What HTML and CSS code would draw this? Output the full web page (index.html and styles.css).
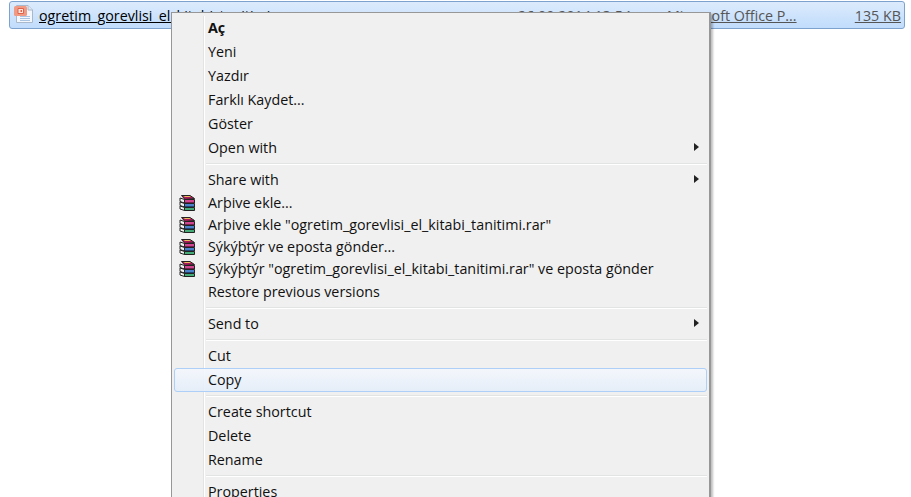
FILE: index.html
```html
<!DOCTYPE html>
<html lang="tr">
<head>
    <meta charset="UTF-8">
    <meta name="viewport" content="width=device-width, initial-scale=1.0">
    <title>Context menu</title>
    <link rel="stylesheet" href="styles.css">
</head>
<body>
    <svg class="defs" width="0" height="0">
        <symbol id="rar" viewBox="0 0 16 16">
            <path d="M2.500 .5L11 .5L15.500 3.500L6 4.500z" fill="#a8185a" stroke="#222"/>
            <path d="M4.500 1h6l1.500 1H6z" fill="#e8bc5c"/>
            <path d="M1 3L5.500 4.500V8L1 6.500z" fill="#f2f2f2" stroke="#222"/>
            <path d="M5.500 4.500H15.500V8H5.500z" fill="#c8207a" stroke="#222"/>
            <path d="M1 7L5.500 8.500V12L1 10.500z" fill="#f2f2f2" stroke="#222"/>
            <path d="M5.500 8.500H15.500V12H5.500z" fill="#2468c0" stroke="#222"/>
            <path d="M1 11L5.500 12.500V15.500L1 14z" fill="#f2f2f2" stroke="#222"/>
            <path d="M5.500 12.500H15.500V15.500H5.500z" fill="#1f9a5a" stroke="#222"/>
            <path d="M6 6h9M6 10h9M6 14h9" stroke="#fff" stroke-opacity=".35"/>
        </symbol>
    </svg>

    <div class="file-row">
        <svg class="file-icon" width="20" height="20" viewBox="0 0 20 20">
            <path d="M2.500 .5H14l4.500 4.500V17.500H2.500z" fill="#f4f7fb" stroke="#a9b8ca"/>
            <path d="M14 .5V5h4.500" fill="#dfe7f1" stroke="#a9b8ca"/>
            <path d="M6 11.500h10M6 13.500h10M6 15.500h10" stroke="#a9c4e2"/>
            <rect x="0" y="1" width="13" height="10" rx="1.500" fill="#f09a84"/>
            <path d="M4 3.500h5.500v5H4z" fill="#fbe6de" stroke="#e0624a"/>
            <path d="M6.500 5h1.500v2H6.500z" fill="#e0624a"/>
        </svg>
        <span class="file-name">ogretim_gorevlisi_el_kitabi_tanitimi</span>
        <span class="file-date">26.09.2014 13:54</span>
        <span class="file-type">Microsoft Office P...</span>
        <span class="file-size">135 KB</span>
    </div>

    <div class="menu">
        <div class="menu-group">
            <div class="item bold">Aç</div>
            <div class="item">Yeni</div>
            <div class="item">Yazdır</div>
            <div class="item">Farklı Kaydet...</div>
            <div class="item">Göster</div>
            <div class="item sub">Open with</div>
        </div>
        <div class="sep"></div>
        <div class="menu-group">
            <div class="item sub">Share with</div>
            <div class="item small"><svg class="rar"><use href="#rar"/></svg>Arþive ekle...</div>
            <div class="item small"><svg class="rar"><use href="#rar"/></svg>Arþive ekle "ogretim_gorevlisi_el_kitabi_tanitimi.rar"</div>
            <div class="item small"><svg class="rar"><use href="#rar"/></svg>Sýkýþtýr ve eposta gönder...</div>
            <div class="item small"><svg class="rar"><use href="#rar"/></svg>Sýkýþtýr "ogretim_gorevlisi_el_kitabi_tanitimi.rar" ve eposta gönder</div>
            <div class="item">Restore previous versions</div>
        </div>
        <div class="sep"></div>
        <div class="menu-group">
            <div class="item sub">Send to</div>
        </div>
        <div class="sep"></div>
        <div class="menu-group">
            <div class="item">Cut</div>
            <div class="item active">Copy</div>
        </div>
        <div class="sep"></div>
        <div class="menu-group">
            <div class="item">Create shortcut</div>
            <div class="item">Delete</div>
            <div class="item">Rename</div>
        </div>
        <div class="sep"></div>
        <div class="menu-group">
            <div class="item">Properties</div>
        </div>
    </div>
</body>
</html>
```

FILE: styles.css
```css
html, body {
    height: 100%;
}
body {
    margin: 0;
    padding: 1px 6px 0 9px;
    box-sizing: border-box;
    overflow: hidden;
    background: #fff;
    font-family: "Open Sans", "Noto Sans", sans-serif;
    font-size: 14.3px;
    color: #111;
}
.defs {
    position: absolute;
}

/* selected file row */
.file-row {
    display: flex;
    align-items: center;
    height: 28px;
    box-sizing: border-box;
    padding: 0 3px 0 4px;
    border: 1px solid #7da2ce;
    border-radius: 3px;
    background: linear-gradient(#dcebfc, #c1dcfc);
    white-space: nowrap;
}
.file-icon {
    flex: none;
    margin-right: 5px;
}
.file-name {
    width: 479px;
    flex: none;
    text-decoration: underline;
    color: #000;
}
.file-date,
.file-type,
.file-size {
    flex: none;
    text-decoration: underline;
    color: #555;
}
.file-date {
    width: 149px;
}
.file-type {
    width: 129px;
}
.file-size {
    margin-left: auto;
}

/* context menu */
.menu {
    position: absolute;
    left: 171px;
    top: 12px;
    width: 540px;
    box-sizing: border-box;
    padding: 3px 2px;
    border: 1px solid #979797;
    border-right-width: 2px;
    background: #f0f0f0;
    box-shadow: 2px 2px 2px rgba(0, 0, 0, 0.25);
}
.menu::before {
    content: "";
    position: absolute;
    left: 31px;
    top: 3px;
    bottom: 0;
    width: 1px;
    background: #e2e3e3;
    box-shadow: 1px 0 0 #fff;
}
.item {
    position: relative;
    display: flex;
    align-items: center;
    height: 24px;
    box-sizing: border-box;
    padding-left: 34px;
    padding-bottom: 2px;
    white-space: nowrap;
}
.item.small {
    height: 22px;
}
.item.bold {
    font-weight: 700;
}
.item.active {
    border: 1px solid #aecff7;
    border-radius: 3px;
    background: linear-gradient(rgba(244, 248, 253, 0.9), rgba(228, 237, 249, 0.9));
    padding-left: 33px;
}
.item.sub::after {
    content: "";
    position: absolute;
    left: 520px;
    top: 7px;
    border-left: 5px solid #222;
    border-top: 4px solid transparent;
    border-bottom: 4px solid transparent;
}
.rar {
    position: absolute;
    left: 5px;
    top: 3px;
    width: 16px;
    height: 16px;
}
.sep {
    height: 1px;
    margin: 3px 0 3px 32px;
    background: #e2e3e3;
    border-bottom: 1px solid #fff;
}
```
